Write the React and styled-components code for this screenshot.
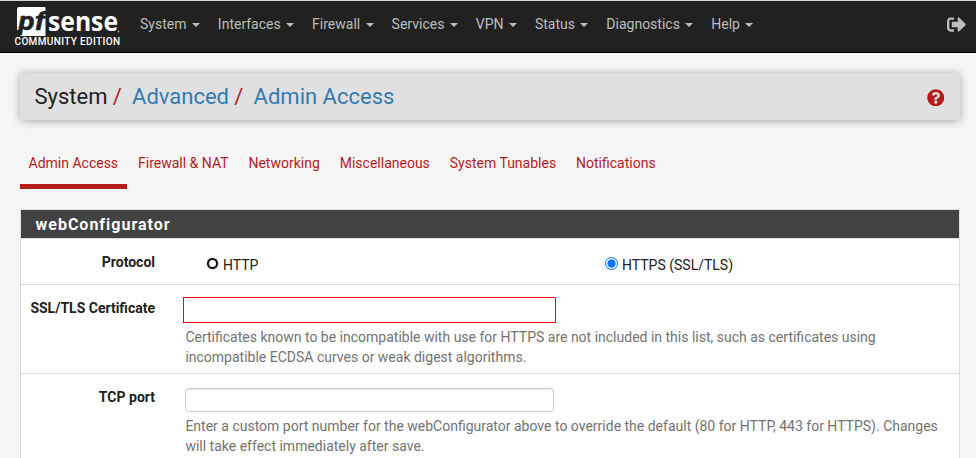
import React from 'react';
import styled, { createGlobalStyle } from 'styled-components';
import { FaSignOutAlt, FaQuestionCircle } from 'react-icons/fa';

const GlobalStyle = createGlobalStyle`
  *, *::before, *::after { box-sizing: border-box; }
  html, body { margin: 0; background: #f5f5f5; height: 100%; overflow: hidden; }
  body { font: 400 14px/20px Roboto, sans-serif; color: #212121; }
`;

const Page = styled.div`
  height: 458px;
  overflow: hidden;
`;

const Navbar = styled.header`
  display: flex;
  height: 53px;
  padding-right: 10px;
  background: #212121;
  border-top: 1px solid #d3d8d5;
  border-bottom: 1px solid #000;
`;

const Brand = styled.a`
  flex: none;
  width: 131px;
  height: 51px;
`;

const BrandLogo = styled.svg`
  display: block;
`;

const Menu = styled.nav`
  display: flex;
  flex: 1;
`;

const MenuItem = styled.a`
  display: flex;
  align-items: center;
  height: 46px;
  padding: 0 9px;
  color: #bdbdbd;
`;

const Caret = styled.span`
  margin: 2px 0 0 5.4px;
  border-top: 4px solid #bdbdbd;
  border-left: 4px solid transparent;
  border-right: 4px solid transparent;
`;

const Logout = styled.a`
  display: flex;
  align-items: center;
  height: 46px;
  color: #bdbdbd;
  font-size: 19px;
`;

const Content = styled.main`
  padding: 20px 16px 0 20px;
`;

const TitleBar = styled.div`
  display: flex;
  align-items: center;
  justify-content: space-between;
  height: 47px;
  padding: 0 16px 0 14.5px;
  background: #e0e0e0;
  border-radius: 2px;
  box-shadow: 0 1px 8px rgba(0, 0, 0, 0.32);
`;

const Crumbs = styled.div`
  display: flex;
  font-size: 22px;
  line-height: 24px;
`;

const Crumb = styled.span`
  color: ${(p) => (p.$link ? '#337ab7' : '#212121')};
`;

const Slash = styled.span`
  margin: 0 10.3px 0 5.2px;
  color: #b71c1c;
`;

const Help = styled.a`
  display: flex;
  padding-top: 2px;
  color: #b71c1c;
  font-size: 17.5px;
`;

const Tabs = styled.div`
  display: flex;
  gap: 2.15px;
  margin-top: 23px;
`;

const Tab = styled.a`
  height: 46px;
  padding: 10px 9.3px 0 8.5px;
  color: #b71c1c;
  border-bottom: 5px solid ${(p) => (p.$active ? '#b71c1c' : 'transparent')};
`;

const Panel = styled.section`
  margin-top: 20px;
  background: #fff;
  border: 1px solid #ddd;
`;

const PanelHeading = styled.h2`
  height: 28px;
  margin: 0;
  padding: 0 14.5px;
  background: #424242;
  color: #fff;
  font-size: 16px;
  font-weight: 700;
  line-height: 29px;
  letter-spacing: 1px;
`;

const Row = styled.div`
  display: grid;
  grid-template-columns: 134px 1fr;
  column-gap: 30px;
  height: ${(p) => p.$height}px;
  padding-top: 14px;
  border-top: 1px solid #ddd;
`;

const Label = styled.label`
  margin-top: -1px;
  text-align: right;
  font-weight: 700;
`;

const Options = styled.div`
  display: grid;
  grid-template-columns: 399px 1fr;
  padding: 2px 0 0 20px;
`;

const Option = styled.label`
  display: flex;
  height: 20px;
`;

const Radio = styled.span`
  flex: none;
  width: 13px;
  height: 13px;
  margin: 2px 4px 0 1px;
  border-radius: 50%;
  border: 1px solid #0075ff;
  background: radial-gradient(circle, #0075ff 3.7px, #fff 4.5px);
`;

const EmptyRadio = styled(Radio)`
  width: 11px;
  height: 11px;
  margin: 3px 5px 0 2px;
  border: 2px solid #111;
  background: #fff;
  box-shadow: 0 0 0 0.5px #bbb;
`;

const Field = styled.div`
  color: #737373;
`;

const Input = styled.input`
  display: block;
  width: 369px;
  height: 24px;
  margin: 0;
  padding: 2px 6px;
  background: #fff;
  border: 1px solid #ccc;
  border-radius: 4px;
  box-shadow: inset 0 1px 1px rgba(0, 0, 0, 0.075);
`;

const CertificateInput = styled(Input)`
  width: 373px;
  height: 26px;
  margin: -2px 0 0 -2px;
  border-color: #f00;
  border-radius: 0;
  box-shadow: none;
`;

const HelpText = styled.p`
  margin: 4px 0 0 0.4px;
`;

const menus = ['System', 'Interfaces', 'Firewall', 'Services', 'VPN', 'Status', 'Diagnostics', 'Help'];
const tabs = ['Admin Access', 'Firewall & NAT', 'Networking', 'Miscellaneous', 'System Tunables', 'Notifications'];

function Logo() {
  return (
    <BrandLogo width="131" height="51" viewBox="0 0 131 51">
      <path d="M19 6H44.500Q45.500 6 45.500 7V34Q45.500 35 44.500 35H20L21.500 29H17V8Q17 6 19 6Z" fill="#fff" />
      <text x="18.500" y="29" fontFamily="Roboto" fontWeight="700" fontStyle="italic" fontSize="25" textLength="26.500" lengthAdjust="spacingAndGlyphs" fill="#212121" stroke="#212121" strokeWidth="0.400">pf</text>
      <text x="48" y="29.500" fontFamily="Open Sans" fontWeight="700" fontSize="27" textLength="70" lengthAdjust="spacingAndGlyphs" fill="#fff">sense</text>
      <circle cx="118.500" cy="30.500" r="0.900" fill="#999" />
      <text x="14.500" y="44" fontFamily="Roboto" fontWeight="500" fontSize="10" textLength="105.500" lengthAdjust="spacing" fill="#fff">COMMUNITY EDITION</text>
    </BrandLogo>
  );
}

export default function App() {
  return (
    <Page>
      <GlobalStyle />
      <Navbar>
        <Brand><Logo /></Brand>
        <Menu>
          {menus.map((name) => (
            <MenuItem key={name}>{name}<Caret /></MenuItem>
          ))}
        </Menu>
        <Logout><FaSignOutAlt /></Logout>
      </Navbar>
      <Content>
        <TitleBar>
          <Crumbs>
            <Crumb>System</Crumb><Slash>/</Slash>
            <Crumb $link>Advanced</Crumb><Slash>/</Slash>
            <Crumb $link>Admin Access</Crumb>
          </Crumbs>
          <Help><FaQuestionCircle /></Help>
        </TitleBar>
        <Tabs>
          {tabs.map((name, i) => <Tab key={name} $active={i === 0}>{name}</Tab>)}
        </Tabs>
        <Panel>
          <PanelHeading>webConfigurator</PanelHeading>
          <Row $height={46}>
            <Label>Protocol</Label>
            <Options>
              <Option><EmptyRadio />HTTP</Option>
              <Option><Radio />HTTPS (SSL/TLS)</Option>
            </Options>
          </Row>
          <Row $height={89}>
            <Label>SSL/TLS Certificate</Label>
            <Field>
              <CertificateInput />
              <HelpText>
                Certificates known to be incompatible with use for HTTPS are not included in this list, such as certificates using<br />
                incompatible ECDSA curves or weak digest algorithms.
              </HelpText>
            </Field>
          </Row>
          <Row $height={90}>
            <Label>TCP port</Label>
            <Field>
              <Input />
              <HelpText>
                Enter a custom port number for the webConfigurator above to override the default (80 for HTTP, 443 for HTTPS). Changes<br />
                will take effect immediately after save.
              </HelpText>
            </Field>
          </Row>
        </Panel>
      </Content>
    </Page>
  );
}
